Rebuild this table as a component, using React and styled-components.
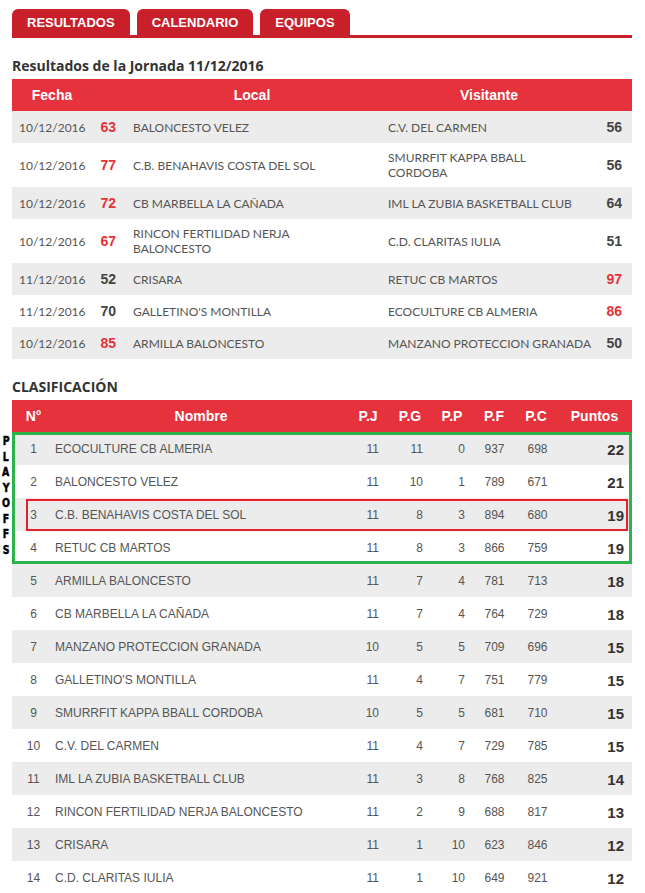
import React from 'react';
import styled, { createGlobalStyle } from 'styled-components';

const GlobalStyle = createGlobalStyle`
  body {
    margin: 0;
    background: #fff;
    font-family: "Liberation Sans", Arial, sans-serif;
  }
`;

const Page = styled.div`
  width: 620px;
  padding: 9px 0 0 12px;
`;

const TabBar = styled.div`
  display: flex;
  gap: 7px;
  border-bottom: 3px solid #c8202b;
`;

const Tab = styled.div`
  height: 26px;
  padding: 0 15px;
  display: flex;
  align-items: center;
  background: #c8202b;
  color: #fff;
  font-weight: bold;
  font-size: 13px;
  border-radius: 6px 6px 0 0;
`;

const SectionTitle = styled.h3`
  margin: 20px 0 5px;
  font-family: "Open Sans", sans-serif;
  font-size: 14px;
  line-height: 16px;
  font-weight: bold;
  color: #333;
  text-transform: ${p => (p.$upper ? 'uppercase' : 'none')};
`;

const ResultsTable = styled.div`
  width: 620px;
`;

const resultCols = '80px 32px 256px 218px 34px';

const ResultsRow = styled.div`
  display: grid;
  grid-template-columns: ${resultCols};
  align-items: center;
  min-height: 32px;
  padding: ${p => (p.$tall ? '7px 0' : '0')};
  box-sizing: border-box;
  background: ${p => (p.$alt ? '#ececec' : '#fff')};
`;

const HeadRow = styled.div`
  display: grid;
  grid-template-columns: ${p => p.$cols};
  align-items: center;
  height: 32px;
  background: #e5323d;
  color: #fff;
  font-weight: bold;
  font-size: 14px;
`;

const HeadCell = styled.div`
  text-align: center;
  grid-column: ${p => p.$span || 'auto'};
`;

const DateCell = styled.div`
  padding-left: 7px;
  font-family: Lato, sans-serif;
  font-size: 12px;
  color: #555;
`;

const Score = styled.div`
  text-align: right;
  padding-right: ${p => p.$pr}px;
  font-weight: bold;
  font-size: 14px;
  color: ${p => (p.$win ? '#e5323d' : '#444')};
`;

const TeamCell = styled.div`
  padding-left: ${p => p.$pl}px;
  font-family: Lato, sans-serif;
  font-size: 12px;
  line-height: 15px;
  color: #555;
  white-space: pre-line;
`;

const Standings = styled.div`
  width: 620px;
`;

const cols = '43px 1fr 42px 42px 42px 42px 42px 75px';

const StandRow = styled.div`
  position: relative;
  display: grid;
  grid-template-columns: ${cols};
  align-items: center;
  height: 33px;
  font-size: 12px;
  color: #555;
  background: ${p => (p.$alt ? '#ececec' : '#fff')};

  &::after {
    content: '';
    display: ${p => (p.$mark ? 'block' : 'none')};
    position: absolute;
    top: 1px;
    bottom: 0;
    left: 14px;
    right: 4px;
    border: 2px solid #e5202b;
    pointer-events: none;
  }
`;

const Cell = styled.div`
  text-align: ${p => p.$align || 'left'};
  padding-right: ${p => p.$pr || 0}px;
  padding-left: ${p => p.$pl || 0}px;
`;

const Points = styled.div`
  text-align: right;
  padding-right: 8px;
  padding-top: 1px;
  font-weight: bold;
  font-size: 15px;
  color: #333;
`;

const PlayoffGroup = styled.div`
  position: relative;

  &::after {
    content: '';
    position: absolute;
    inset: 0;
    border: 3px solid #2eb34a;
    pointer-events: none;
  }
`;

const PlayoffLabel = styled.div`
  position: absolute;
  left: -12px;
  top: 1px;
  width: 12px;
  display: flex;
  flex-direction: column;
  align-items: center;
  font-family: "DejaVu Sans Condensed", "Liberation Sans Narrow", sans-serif;
  font-weight: 900;
  font-size: 13px;
  line-height: 15.5px;
  color: #000;
  -webkit-text-stroke: 0.5px #000;

  span {
    display: block;
    transform: scaleX(0.8);
  }
`;

const results = [
  { date: '10/12/2016', ls: 63, local: 'BALONCESTO VELEZ', visit: 'C.V. DEL CARMEN', vs: 56 },
  { date: '10/12/2016', ls: 77, local: 'C.B. BENAHAVIS COSTA DEL SOL', visit: 'SMURRFIT KAPPA BBALL\nCORDOBA', vs: 56, tall: true },
  { date: '10/12/2016', ls: 72, local: 'CB MARBELLA LA CAÑADA', visit: 'IML LA ZUBIA BASKETBALL CLUB', vs: 64 },
  { date: '10/12/2016', ls: 67, local: 'RINCON FERTILIDAD NERJA\nBALONCESTO', visit: 'C.D. CLARITAS IULIA', vs: 51, tall: true },
  { date: '11/12/2016', ls: 52, local: 'CRISARA', visit: 'RETUC CB MARTOS', vs: 97 },
  { date: '11/12/2016', ls: 70, local: "GALLETINO'S MONTILLA", visit: 'ECOCULTURE CB ALMERIA', vs: 86 },
  { date: '10/12/2016', ls: 85, local: 'ARMILLA BALONCESTO', visit: 'MANZANO PROTECCION GRANADA', vs: 50 },
];

const standings = [
  [1, 'ECOCULTURE CB ALMERIA', 11, 11, 0, 937, 698, 22],
  [2, 'BALONCESTO VELEZ', 11, 10, 1, 789, 671, 21],
  [3, 'C.B. BENAHAVIS COSTA DEL SOL', 11, 8, 3, 894, 680, 19],
  [4, 'RETUC CB MARTOS', 11, 8, 3, 866, 759, 19],
  [5, 'ARMILLA BALONCESTO', 11, 7, 4, 781, 713, 18],
  [6, 'CB MARBELLA LA CAÑADA', 11, 7, 4, 764, 729, 18],
  [7, 'MANZANO PROTECCION GRANADA', 10, 5, 5, 709, 696, 15],
  [8, "GALLETINO'S MONTILLA", 11, 4, 7, 751, 779, 15],
  [9, 'SMURRFIT KAPPA BBALL CORDOBA', 10, 5, 5, 681, 710, 15],
  [10, 'C.V. DEL CARMEN', 11, 4, 7, 729, 785, 15],
  [11, 'IML LA ZUBIA BASKETBALL CLUB', 11, 3, 8, 768, 825, 14],
  [12, 'RINCON FERTILIDAD NERJA BALONCESTO', 11, 2, 9, 688, 817, 13],
  [13, 'CRISARA', 11, 1, 10, 623, 846, 12],
  [14, 'C.D. CLARITAS IULIA', 11, 1, 10, 649, 921, 12],
];

function Standing({ row, index }) {
  const [pos, name, pj, pg, pp, pf, pc, pts] = row;
  return (
    <StandRow $alt={index % 2 === 0} $mark={pos === 3}>
      <Cell $align="center">{pos}</Cell>
      <Cell>{name}</Cell>
      <Cell $align="right" $pr={10}>{pj}</Cell>
      <Cell $align="right" $pr={8}>{pg}</Cell>
      <Cell $align="right" $pr={8}>{pp}</Cell>
      <Cell $align="center" $pl={1}>{pf}</Cell>
      <Cell $align="center" $pl={3}>{pc}</Cell>
      <Points>{pts}</Points>
    </StandRow>
  );
}

export default function App() {
  return (
    <>
      <GlobalStyle />
      <Page>
        <TabBar>
          <Tab>RESULTADOS</Tab>
          <Tab>CALENDARIO</Tab>
          <Tab>EQUIPOS</Tab>
        </TabBar>

        <SectionTitle>Resultados de la Jornada 11/12/2016</SectionTitle>
        <ResultsTable>
          <HeadRow $cols={resultCols}>
            <HeadCell>Fecha</HeadCell>
            <HeadCell $span="3 / 4">Local</HeadCell>
            <HeadCell $span="4 / 5">Visitante</HeadCell>
          </HeadRow>
          {results.map((r, i) => (
            <ResultsRow key={i} $alt={i % 2 === 0} $tall={r.tall}>
              <DateCell>{r.date}</DateCell>
              <Score $pr={8} $win={r.ls > r.vs}>{r.ls}</Score>
              <TeamCell $pl={9}>{r.local}</TeamCell>
              <TeamCell $pl={8}>{r.visit}</TeamCell>
              <Score $pr={10} $win={r.vs > r.ls}>{r.vs}</Score>
            </ResultsRow>
          ))}
        </ResultsTable>

        <SectionTitle $upper>Clasificación</SectionTitle>
        <Standings>
          <HeadRow $cols={cols}>
            <HeadCell>N°</HeadCell>
            <HeadCell>Nombre</HeadCell>
            <HeadCell>P.J</HeadCell>
            <HeadCell>P.G</HeadCell>
            <HeadCell>P.P</HeadCell>
            <HeadCell>P.F</HeadCell>
            <HeadCell>P.C</HeadCell>
            <HeadCell>Puntos</HeadCell>
          </HeadRow>
          <PlayoffGroup>
            <PlayoffLabel>
              {'PLAYOFFS'.split('').map((l, i) => (
                <span key={i}>{l}</span>
              ))}
            </PlayoffLabel>
            {standings.slice(0, 4).map((row, i) => (
              <Standing key={row[0]} row={row} index={i} />
            ))}
          </PlayoffGroup>
          {standings.slice(4).map((row, i) => (
            <Standing key={row[0]} row={row} index={i + 4} />
          ))}
        </Standings>
      </Page>
    </>
  );
}
